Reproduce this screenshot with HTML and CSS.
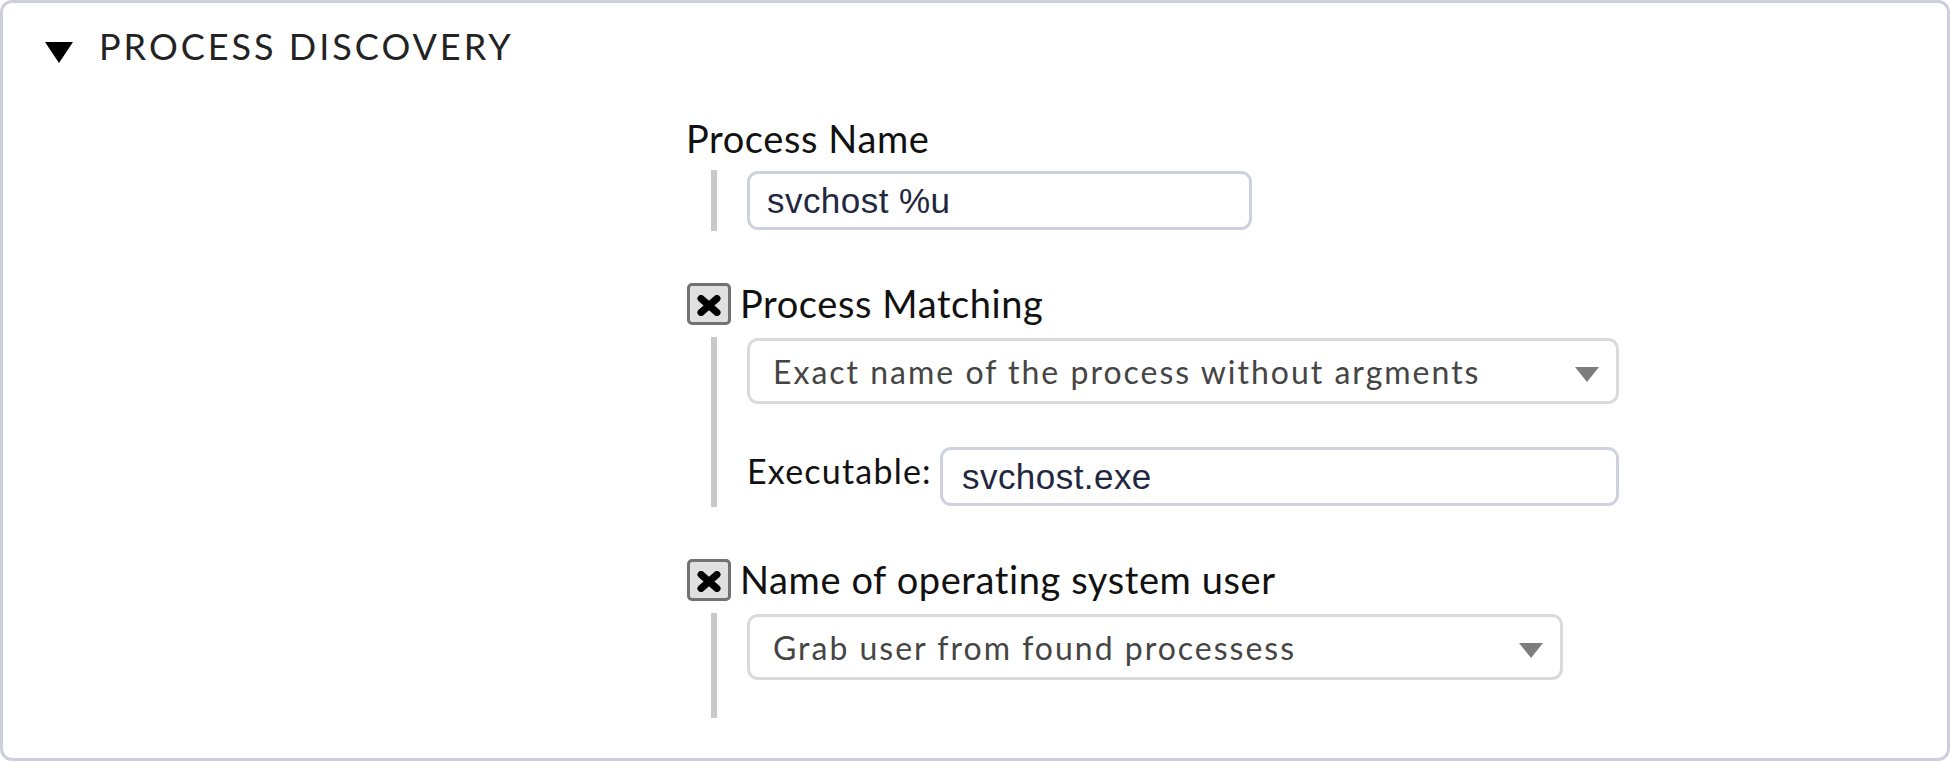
FILE: index.html
```html
<!DOCTYPE html>
<html lang="en">
<head>
<meta charset="utf-8">
<title>Process discovery</title>
<link rel="stylesheet" href="styles.css">
</head>
<body>
<div class="panel">
  <div class="panel-head">
    <svg class="caret" viewBox="0 0 28 21" aria-hidden="true"><polygon points="0,0 28,0 14,21" fill="#000"/></svg>
    <span class="panel-title">PROCESS DISCOVERY</span>
  </div>
  <div class="panel-body">
    <div class="field">
      <div class="field-label">Process Name</div>
      <div class="nest">
        <div class="text-input input-name">svchost %u</div>
      </div>
    </div>

    <div class="field">
      <div class="check-row">
        <span class="checkbox"><svg class="xmark" viewBox="0 0 24 21" aria-hidden="true"><path d="M4 3.5 L20 17.5 M20 3.5 L4 17.5" stroke="#000" stroke-width="7" stroke-linecap="round" fill="none"/></svg></span>
        <span class="check-label">Process Matching</span>
      </div>
      <div class="nest">
        <div class="select select-match">
          <span>Exact name of the process without argments</span>
          <svg class="select-arrow" viewBox="0 0 24 15" aria-hidden="true"><polygon points="0,0 24,0 12,15" fill="#7d7d7d"/></svg>
        </div>
        <div class="exec-row">
          <span class="exec-label">Executable:</span>
          <div class="text-input input-exec">svchost.exe</div>
        </div>
      </div>
    </div>

    <div class="field">
      <div class="check-row">
        <span class="checkbox"><svg class="xmark" viewBox="0 0 24 21" aria-hidden="true"><path d="M4 3.5 L20 17.5 M20 3.5 L4 17.5" stroke="#000" stroke-width="7" stroke-linecap="round" fill="none"/></svg></span>
        <span class="check-label">Name of operating system user</span>
      </div>
      <div class="nest nest-tall">
        <div class="select select-user">
          <span>Grab user from found processess</span>
          <svg class="select-arrow" viewBox="0 0 24 15" aria-hidden="true"><polygon points="0,0 24,0 12,15" fill="#7d7d7d"/></svg>
        </div>
      </div>
    </div>
  </div>
</div>
</body>
</html>
```

FILE: styles.css
```css
html, body {
  margin: 0;
  padding: 0;
  background: #ffffff;
}

body {
  font-family: Lato, "Liberation Sans", sans-serif;
  color: #111111;
}

.panel {
  box-sizing: border-box;
  width: 1950px;
  height: 761px;
  border: 3px solid #cdcfdd;
  border-radius: 12px;
  background: #ffffff;
}

.panel-head {
  display: flex;
  align-items: flex-start;
  padding: 22px 0 0 42px;
}

.caret {
  width: 28px;
  height: 21px;
  margin-top: 17px;
  margin-right: 26px;
  flex: none;
}

.panel-title {
  font-size: 36px;
  line-height: 42px;
  letter-spacing: 3px;
  color: #232323;
}

.panel-body {
  padding: 49px 0 0 683px;
}

.field + .field {
  margin-top: 52px;
}

.field-label {
  font-size: 38px;
  line-height: 44px;
  letter-spacing: 0.6px;
  margin-bottom: 10px;
  color: #111111;
}

.nest {
  margin-left: 25px;
  border-left: 6px solid #c9c9c9;
  padding: 1px 0 1px 30px;
}

.nest-tall {
  padding-bottom: 38px;
}

.check-row {
  display: flex;
  align-items: flex-start;
  margin-bottom: 12px;
}

.checkbox {
  box-sizing: border-box;
  width: 44px;
  height: 42px;
  margin-left: 1px;
  border: 3px solid #727272;
  border-radius: 5px;
  background: #e0e0e0;
  display: flex;
  align-items: center;
  justify-content: center;
  flex: none;
}

.xmark {
  width: 24px;
  height: 21px;
  margin-top: 2px;
}

.check-label {
  font-size: 38px;
  line-height: 40px;
  letter-spacing: 0.6px;
  margin-left: 9px;
  color: #111111;
}

.text-input {
  box-sizing: border-box;
  height: 59px;
  border: 3px solid #cfd1df;
  border-radius: 11px;
  padding: 0 17px;
  display: flex;
  align-items: center;
  font-family: "Liberation Sans", Arial, sans-serif;
  font-size: 35px;
  letter-spacing: 0.45px;
  color: #1f2840;
  background: #ffffff;
}

.input-name {
  width: 505px;
}

.input-exec {
  width: 679px;
  padding-left: 19px;
}

.select {
  box-sizing: border-box;
  height: 66px;
  border: 3px solid #dadada;
  border-radius: 11px;
  padding: 0 17px 0 23px;
  display: flex;
  align-items: center;
  justify-content: space-between;
  font-size: 32px;
  letter-spacing: 2px;
  color: #454545;
  background: #ffffff;
}

.select-match {
  width: 872px;
}

.select-user {
  width: 816px;
}

.select-arrow {
  width: 24px;
  height: 15px;
  margin-top: 6px;
  flex: none;
}

.exec-row {
  display: flex;
  align-items: flex-start;
  justify-content: space-between;
  width: 872px;
  margin-top: 43px;
}

.exec-label {
  font-size: 34px;
  line-height: 41px;
  letter-spacing: 1.2px;
  margin-top: 3px;
  color: #111111;
}
```
